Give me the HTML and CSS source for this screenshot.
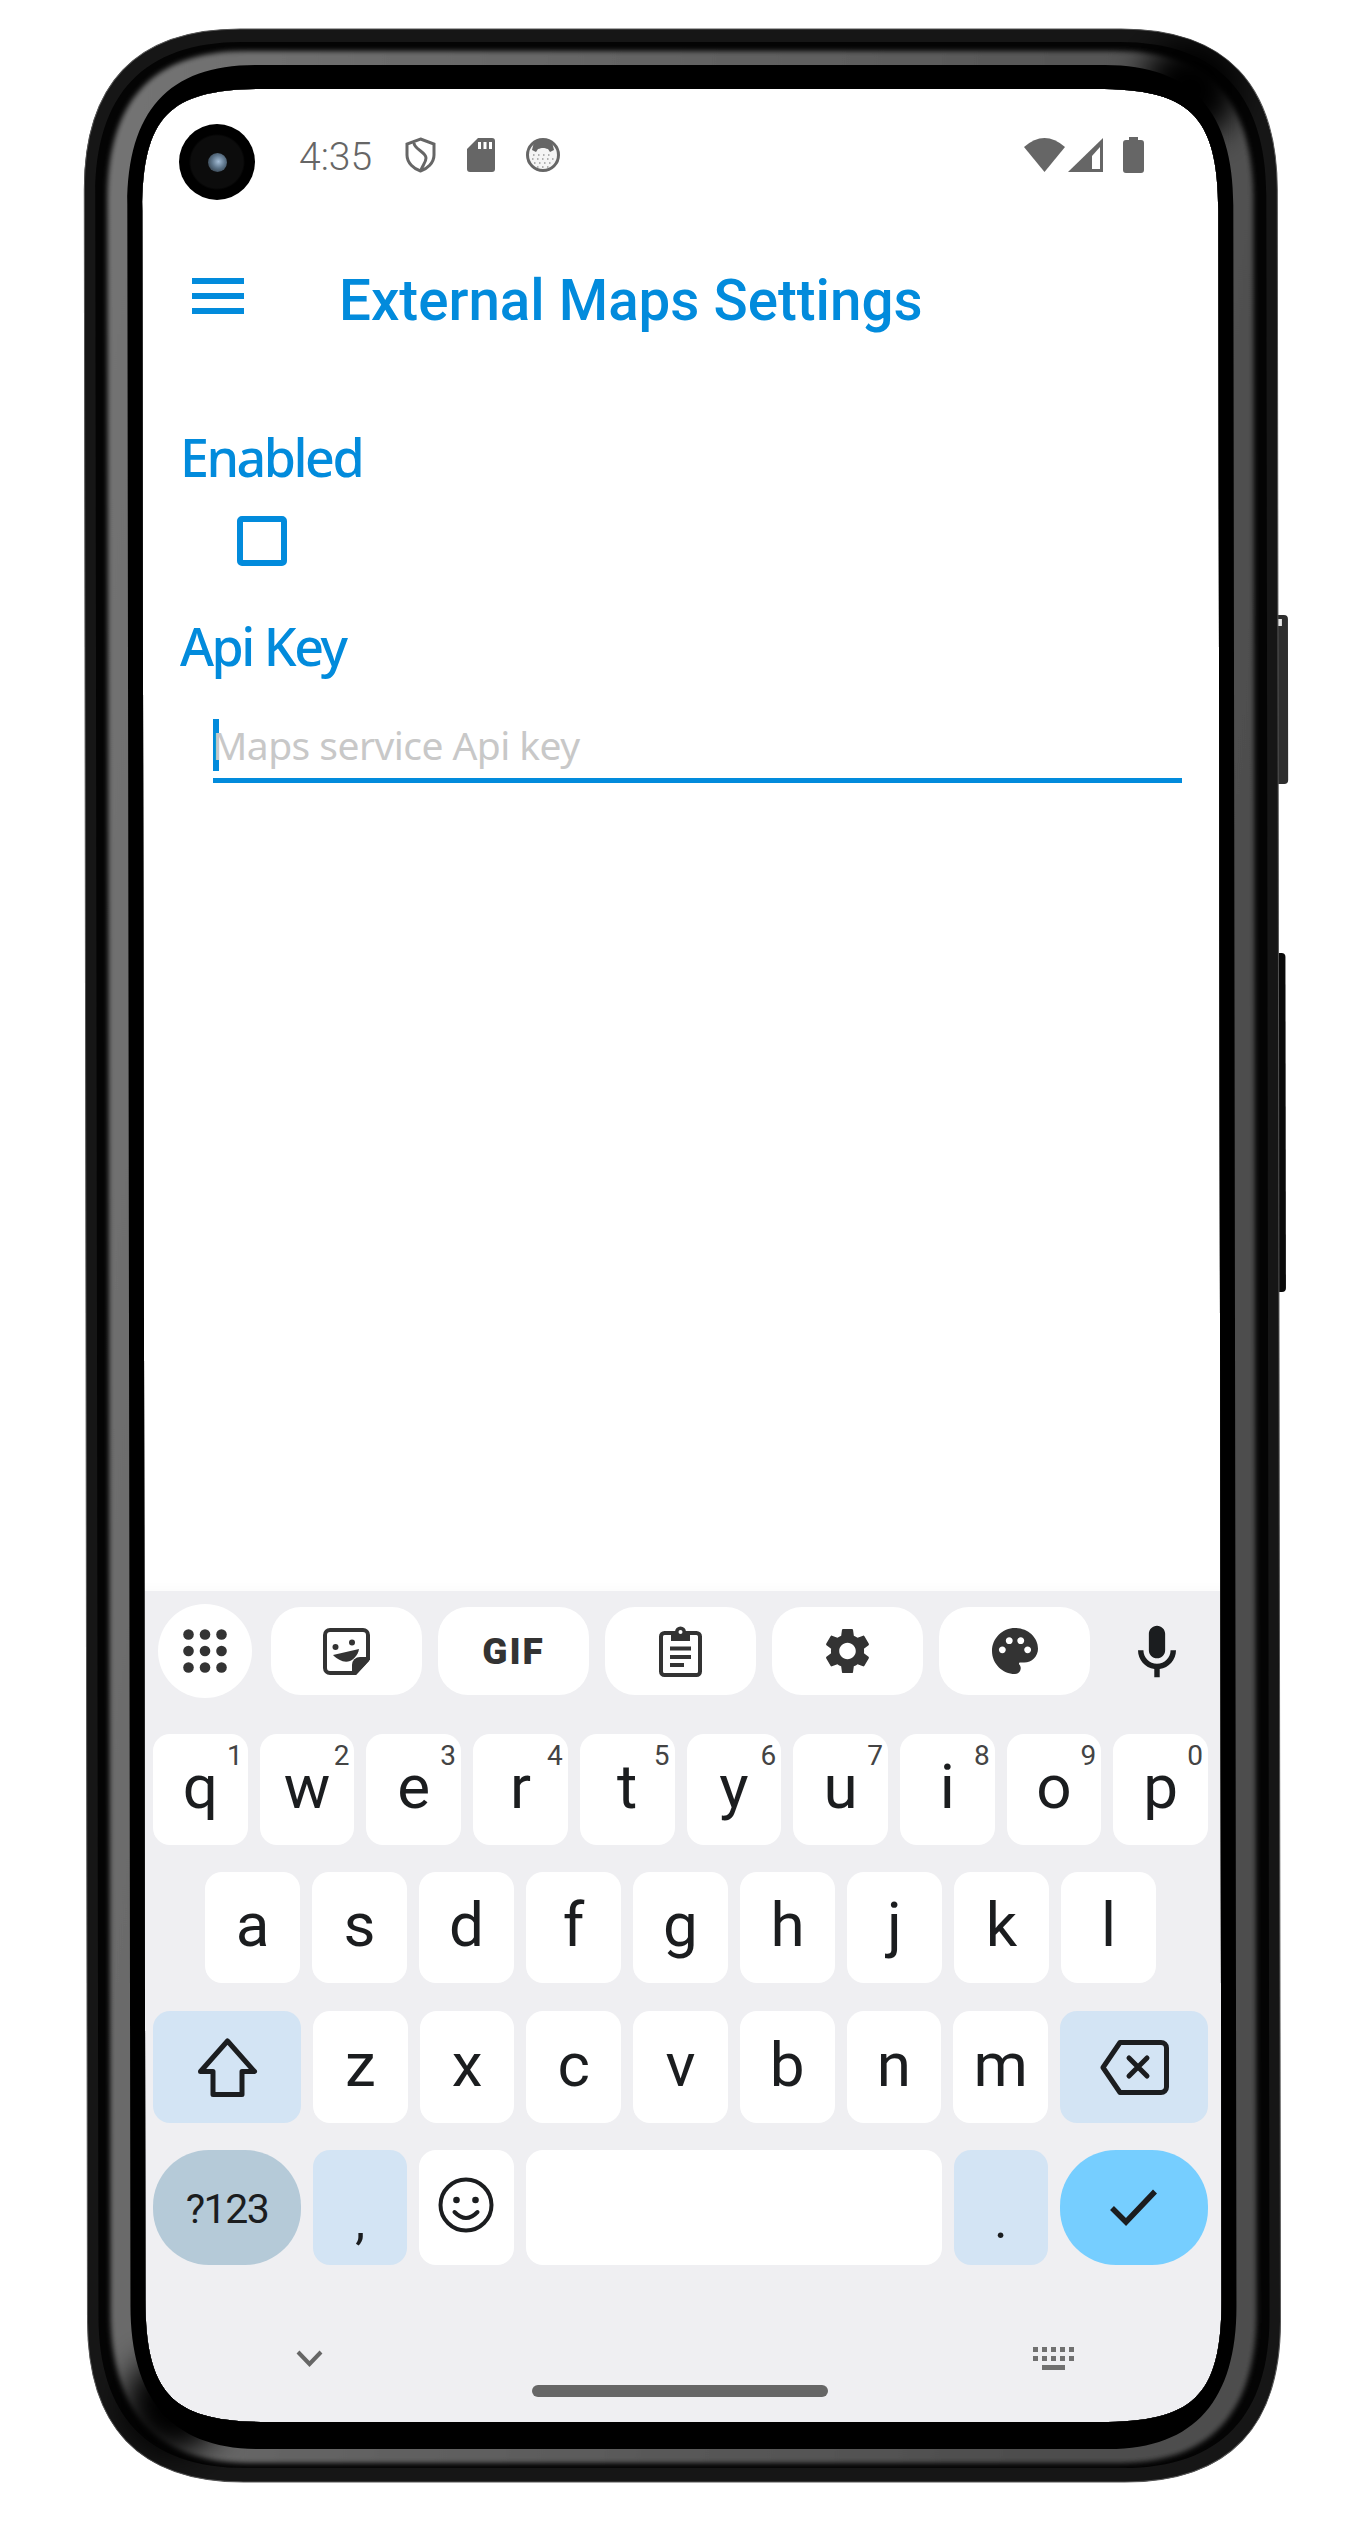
FILE: index.html
```html
<!DOCTYPE html>
<html lang="en">
<head>
    <meta charset="UTF-8">
    <meta name="viewport" content="width=device-width, initial-scale=1.0">
    <title>External Maps Settings</title>
    <link rel="stylesheet" href="styles.css">
</head>
<body>

<div class="phone">

    <div class="screen">

        <div class="camera"><span class="lens"></span></div>

        <div class="status-bar">
            <span class="time">4:35</span>
            <svg class="status-icon" width="31" height="36" viewBox="0 0 31 36" fill="none" stroke="#666" stroke-width="3">
                <path d="M15.5 2 29 7V18C29 26 22 32 15.5 34 9 32 2 26 2 18V7Z"/>
                <path d="M9 6C9 12 21 15 21 21 21 25 18 28 16 33"/>
            </svg>
            <svg class="status-icon" width="28" height="34" viewBox="0 0 28 34" fill="#666">
                <path d="M11 0H25A3 3 0 0 1 28 3V31A3 3 0 0 1 25 34H3A3 3 0 0 1 0 31V11Z"/>
                <path fill="#fff" d="M11 4h3v7h-3zM16.5 4h3v7h-3zM22 4h3v7h-3z"/>
            </svg>
            <svg class="status-icon" width="34" height="34" viewBox="0 0 34 34">
                <circle cx="17" cy="17" r="15.5" fill="#f4f4f4" stroke="#666" stroke-width="3"/>
                <path fill="#666" d="M8 4C13 0 21 0 26 4L28 12 24 14 22 11C18 9.500 16 9.500 12 11L10 14 6 12Z"/>
                <path fill="none" stroke="#999" stroke-width="1.5" stroke-dasharray="1.5 3.5" d="M7 17H27M6 21H28M8 25H26M11 29H23"/>
            </svg>
            <div class="status-right">
                <svg class="wifi" width="41" height="34" viewBox="0 0 41 34" fill="#666">
                    <path d="M0 9Q20.5 -9 41 9L20.5 34Z"/>
                </svg>
                <svg class="signal" width="35" height="34" viewBox="0 0 35 34" fill="#666">
                    <path d="M0 34 35 0V34Z"/>
                    <path fill="#fff" d="M24 18 32 9V31H24Z"/>
                </svg>
                <svg class="battery" width="21" height="36" viewBox="0 0 21 36" fill="#666">
                    <path d="M6 0H15V3H18A3 3 0 0 1 21 6V33A3 3 0 0 1 18 36H3A3 3 0 0 1 0 33V6A3 3 0 0 1 3 3H6Z"/>
                </svg>
            </div>
        </div>

        <header class="app-bar">
            <div class="menu-icon"><span></span><span></span><span></span></div>
            <h1 class="title">External Maps Settings</h1>
        </header>

        <main class="content">
            <div class="label">Enabled</div>
            <div class="checkbox"></div>
            <div class="label api-label">Api Key</div>
            <div class="field">
                <span class="caret"></span>
                <span class="placeholder">Maps service Api key</span>
            </div>
        </main>

        <section class="keyboard">
            <div class="toolbar">
                <div class="tool-round">
                    <svg width="44" height="44" viewBox="0 0 44 44" fill="#333">
                        <circle cx="5.5" cy="5.5" r="5.3"/><circle cx="22" cy="5.5" r="5.3"/><circle cx="38.5" cy="5.5" r="5.3"/>
                        <circle cx="5.5" cy="22" r="5.3"/><circle cx="22" cy="22" r="5.3"/><circle cx="38.5" cy="22" r="5.3"/>
                        <circle cx="5.5" cy="38.5" r="5.3"/><circle cx="22" cy="38.5" r="5.3"/><circle cx="38.5" cy="38.5" r="5.3"/>
                    </svg>
                </div>
                <div class="tool">
                    <svg width="47" height="47" viewBox="0 0 47 47">
                        <path fill="none" stroke="#333" stroke-width="4" d="M7 2H40A5 5 0 0 1 45 7V31L32 45H7A5 5 0 0 1 2 40V7A5 5 0 0 1 7 2Z"/>
                        <path fill="#333" d="M46 29V33L33 47H29V37A8 8 0 0 1 37 29Z"/>
                        <circle cx="12.5" cy="19" r="3" fill="#333"/><circle cx="29" cy="14.5" r="3" fill="#333"/>
                        <path fill="#333" d="M10 27 36 21C35 27 31 31 27 33 21 35 15 32 10 27Z"/>
                    </svg>
                </div>
                <div class="tool"><span class="gif">GIF</span></div>
                <div class="tool">
                    <svg width="43" height="51" viewBox="0 0 43 51" fill="none" stroke="#333" stroke-width="4">
                        <rect x="2" y="7" width="39" height="42" rx="3.5"/>
                        <path fill="#333" stroke="none" d="M12 6H16A5.5 5.5 0 0 1 27 6H31V15H12Z"/>
                        <circle cx="21.5" cy="6" r="2" fill="#fff" stroke="none"/>
                        <path d="M11 22.5H32M11 31H32M11 39H25"/>
                    </svg>
                </div>
                <div class="tool">
                    <svg width="45" height="46" viewBox="2.5 2 19 20" fill="#333">
                        <path d="M19.14 12.94c.04-.3.06-.61.06-.94 0-.32-.02-.64-.07-.94l2.03-1.58c.18-.14.23-.41.12-.61l-1.92-3.32c-.12-.22-.37-.29-.59-.22l-2.39.96c-.5-.38-1.03-.7-1.62-.94l-.36-2.54c-.04-.24-.24-.41-.48-.41h-3.84c-.24 0-.43.17-.47.41l-.36 2.54c-.59.24-1.13.57-1.62.94l-2.39-.96c-.22-.08-.47 0-.59.22L2.74 8.87c-.12.21-.08.47.12.61l2.03 1.58c-.05.3-.09.63-.09.94s.02.64.07.94l-2.03 1.58c-.18.14-.23.41-.12.61l1.92 3.32c.12.22.37.29.59.22l2.39-.96c.5.38 1.03.7 1.62.94l.36 2.54c.05.24.24.41.48.41h3.84c.24 0 .44-.17.47-.41l.36-2.54c.59-.24 1.13-.56 1.62-.94l2.39.96c.22.08.47 0 .59-.22l1.92-3.32c.12-.22.07-.47-.12-.61l-2.01-1.58zM12 15.6c-1.98 0-3.6-1.62-3.6-3.6s1.62-3.6 3.6-3.6 3.6 1.62 3.6 3.6-1.62 3.6-3.6 3.6z"/>
                    </svg>
                </div>
                <div class="tool">
                    <svg width="46" height="46" viewBox="2 2 20 20" fill="#333">
                        <path d="M12 2C6.49 2 2 6.49 2 12s4.49 10 10 10c1.38 0 2.5-1.12 2.5-2.5 0-.61-.23-1.2-.64-1.67-.08-.1-.13-.21-.13-.33 0-.28.22-.5.5-.5H16c3.31 0 6-2.69 6-6 0-4.96-4.49-9-10-9zm-5.5 11c-.83 0-1.5-.67-1.5-1.5S5.67 10 6.5 10 8 10.67 8 11.5 7.33 13 6.5 13zm3-4C8.67 9 8 8.33 8 7.5S8.67 6 9.5 6s1.5.67 1.5 1.5S10.33 9 9.5 9zm5 0c-.83 0-1.5-.67-1.5-1.5S13.67 6 14.5 6s1.5.67 1.5 1.5S15.33 9 14.5 9zm3 4c-.83 0-1.5-.67-1.5-1.5s.67-1.5 1.5-1.5 1.5.67 1.5 1.5-.67 1.5-1.5 1.5z"/>
                    </svg>
                </div>
                <svg class="mic" width="38" height="53" viewBox="5 2 14 19" fill="#1b1d1f">
                    <path d="M12 14c1.66 0 3-1.34 3-3V5c0-1.66-1.34-3-3-3S9 3.34 9 5v6c0 1.66 1.34 3 3 3zM17 11c0 2.76-2.24 5-5 5s-5-2.24-5-5H5c0 3.53 2.61 6.43 6 6.92V21h2v-3.08c3.39-.49 6-3.39 6-6.92h-2z"/>
                </svg>
            </div>

            <div class="key-row row-one">
                <div class="key">q<sup class="hint">1</sup></div>
                <div class="key">w<sup class="hint">2</sup></div>
                <div class="key">e<sup class="hint">3</sup></div>
                <div class="key">r<sup class="hint">4</sup></div>
                <div class="key">t<sup class="hint">5</sup></div>
                <div class="key">y<sup class="hint">6</sup></div>
                <div class="key">u<sup class="hint">7</sup></div>
                <div class="key">i<sup class="hint">8</sup></div>
                <div class="key">o<sup class="hint">9</sup></div>
                <div class="key">p<sup class="hint">0</sup></div>
            </div>

            <div class="key-row row-two">
                <div class="key">a</div>
                <div class="key">s</div>
                <div class="key">d</div>
                <div class="key">f</div>
                <div class="key">g</div>
                <div class="key">h</div>
                <div class="key">j</div>
                <div class="key">k</div>
                <div class="key">l</div>
            </div>

            <div class="key-row row-three">
                <div class="key key-wide key-blue">
                    <svg width="61" height="59" viewBox="0 0 61 59" fill="none" stroke="#1b1d1f" stroke-width="5" stroke-linejoin="round">
                        <path d="M30.5 3 57.5 33.5H45V56.5H16V33.5H3.5Z"/>
                    </svg>
                </div>
                <div class="key">z</div>
                <div class="key">x</div>
                <div class="key">c</div>
                <div class="key">v</div>
                <div class="key">b</div>
                <div class="key">n</div>
                <div class="key">m</div>
                <div class="key key-wide key-blue">
                    <svg width="69" height="55" viewBox="0 0 69 55" fill="none" stroke="#1b1d1f" stroke-width="5" stroke-linejoin="round">
                        <path d="M20 2.5H61A5.5 5.5 0 0 1 66.5 8V47A5.5 5.5 0 0 1 61 52.5H20L3 27.5Z"/>
                        <path stroke-linecap="round" d="M29 18 47 36M47 18 29 36"/>
                    </svg>
                </div>
            </div>

            <div class="key-row row-four">
                <div class="key key-wide key-symbols">?123</div>
                <div class="key key-blue key-punct">,</div>
                <div class="key">
                    <svg width="56" height="56" viewBox="0 0 56 56" fill="none" stroke="#1b1d1f" stroke-width="4">
                        <circle cx="28" cy="28" r="25.5"/>
                        <circle cx="18.5" cy="23" r="3.3" fill="#1b1d1f" stroke="none"/>
                        <circle cx="37.5" cy="23" r="3.3" fill="#1b1d1f" stroke="none"/>
                        <path stroke-linecap="round" d="M16.5 35Q28 47 39.5 35"/>
                    </svg>
                </div>
                <div class="key key-space"></div>
                <div class="key key-blue key-punct">.</div>
                <div class="key key-wide key-enter">
                    <svg width="47" height="37" viewBox="0 0 47 37" fill="none" stroke="#1b1d1f" stroke-width="5.5">
                        <path d="M2 19 16 33 45 2.5"/>
                    </svg>
                </div>
            </div>

            <div class="nav-bar">
                <svg class="chevron" width="27" height="17" viewBox="0 0 27 17" fill="none" stroke="#666" stroke-width="4">
                    <path d="M2 2 13.5 14 25 2"/>
                </svg>
                <div class="home-pill"></div>
                <svg class="kb-icon" width="42" height="23" viewBox="0 0 42 23" fill="#707070">
                    <path d="M0 0h5v5H0zM9 0h5v5H9zM18 0h5v5h-5zM27 0h5v5h-5zM36 0h5v5h-5zM0 9h5v5H0zM9 9h5v5H9zM18 9h5v5h-5zM27 9h5v5h-5zM36 9h5v5h-5zM9 18h23v5H9z"/>
                </svg>
            </div>
        </section>
    </div>

    <!-- phone body, sits over the screen edges -->
    <svg class="frame" width="1370" height="2534" viewBox="0 0 1370 2534">
        <defs>
            <clipPath id="ring">
                <path clip-rule="evenodd" d="M0 0H1370V2534H0ZM142 211C142 113 172 89 264 89H1096C1188 89 1218 113 1218 211V2300C1218 2398 1188 2422 1096 2422H264C172 2422 142 2398 142 2300Z"/>
            </clipPath>
            <clipPath id="body">
                <path d="M84 190C84 85 135 29 240 29H1121C1226 29 1277 85 1277 190V2321C1277 2426 1226 2482 1121 2482H240C135 2482 84 2426 84 2321Z"/>
            </clipPath>
            <linearGradient id="band" x1="0" y1="0" x2="1" y2="0.3">
                <stop offset="0" stop-color="#747474"/>
                <stop offset="1" stop-color="#4e4e4e"/>
            </linearGradient>
            <filter id="soft" x="-5%" y="-5%" width="110%" height="110%">
                <feGaussianBlur stdDeviation="2.5"/>
            </filter>
            <filter id="softer" x="-50%" y="-50%" width="200%" height="200%">
                <feGaussianBlur stdDeviation="16"/>
            </filter>
        </defs>
        <g transform="matrix(1 0 .0015 1 0 0)">
            <path fill="#2e2e2e" d="M1275 615H1283Q1287 615 1287 619V780Q1287 784 1283 784H1275Z"/>
            <path fill="#e6e6e6" d="M1276 619h5v7h-5z"/>
            <path fill="#0a0a0a" d="M1273 953H1280Q1284 953 1284 957V1288Q1284 1292 1280 1292H1273Z"/>
            <g clip-path="url(#ring)">
                <path fill="#161616" stroke="#555" stroke-width="1" d="M84 190C84 85 135 29 240 29H1121C1226 29 1277 85 1277 190V2321C1277 2426 1226 2482 1121 2482H240C135 2482 84 2426 84 2321Z"/>
                <path fill="#040404" d="M95 195C95 95 143 42 242 42H1119C1218 42 1266 95 1266 195V2316C1266 2415 1218 2468 1119 2468H242C143 2468 95 2415 95 2316Z"/>
                <g clip-path="url(#body)">
                    <path fill="url(#band)" filter="url(#soft)" d="M107 200C107 103 150 51 246 51H1115C1211 51 1253 103 1253 200V2311C1253 2408 1211 2463 1115 2463H246C150 2463 107 2408 107 2311Z"/>
                    <circle cx="1190" cy="90" r="50" fill="#000" filter="url(#softer)"/>
                    <circle cx="170" cy="2405" r="50" fill="#000" filter="url(#softer)"/>
                </g>
                <path fill="#000" d="M127 205C127 112 168 65 255 65H1105C1192 65 1233 112 1233 205V2306C1233 2399 1192 2449 1105 2449H255C168 2449 127 2399 127 2306Z"/>
            </g>
        </g>
    </svg>
</div>

</body>
</html>
```

FILE: styles.css
```css
body {
    margin: 0;
    background-color: #fff;
    font-family: Roboto, sans-serif;
}

.phone {
    position: relative;
    width: 1370px;
    height: 2534px;
    overflow: hidden;
    padding: 85px 0 0 138px;
    box-sizing: border-box;
}

.frame {
    position: absolute;
    left: 0;
    top: 0;
}

.screen {
    position: relative;
    display: flex;
    flex-direction: column;
    width: 1090px;
    height: 2345px;
    background-color: #fff;
}

.camera {
    position: absolute;
    left: 41px;
    top: 39px;
    display: flex;
    align-items: center;
    justify-content: center;
    width: 76px;
    height: 76px;
    border-radius: 50%;
    background: radial-gradient(circle, #0c0c0c 0, #0c0c0c 26px, #000 28px);
}

.lens {
    width: 19px;
    height: 19px;
    border-radius: 50%;
    background: radial-gradient(circle at 55% 45%, #a4bdd6 0, #5c7388 45%, #20262c 100%);
}

/* status bar */
.status-bar {
    display: flex;
    align-items: center;
    gap: 31px;
    height: 36px;
    margin-top: 52px;
    padding: 0 84px 0 161px;
}

.time {
    width: 75px;
    margin-top: 3px;
    font-size: 39px;
    font-weight: 300;
    line-height: 36px;
    color: #666;
    white-space: nowrap;
}

.status-icon {
    display: block;
    flex: none;
}

.status-right {
    display: flex;
    align-items: center;
    margin-left: auto;
}

.signal {
    margin-left: 3px;
}

.battery {
    margin-left: 20px;
}

/* app bar */
.app-bar {
    display: flex;
    align-items: center;
    height: 60px;
    margin-top: 97px;
    padding-left: 54px;
}

.menu-icon {
    display: flex;
    flex-direction: column;
    gap: 9px;
    width: 52px;
    margin-top: -9px;
}

.menu-icon span {
    height: 6px;
    background-color: #028bdc;
}

.title {
    margin: 2px 0 0 95px;
    font-size: 56.5px;
    font-weight: 500;
    line-height: 60px;
    color: #028bdc;
    white-space: nowrap;
}

/* form */
.content {
    flex: 1;
    padding-left: 42px;
    font-family: "Noto Sans", sans-serif;
}

.label {
    margin-top: 97px;
    font-size: 52px;
    font-weight: 500;
    line-height: 60px;
    letter-spacing: -2.5px;
    color: #028bdc;
}

.api-label {
    margin-top: 50px;
}

.checkbox {
    width: 38px;
    height: 38px;
    margin: 29px 0 0 57px;
    border: 6px solid #028bdc;
    border-radius: 5px;
}

.field {
    display: flex;
    width: 969px;
    height: 52px;
    margin: 43px 0 0 33px;
    padding-bottom: 7px;
    border-bottom: 5px solid #028bdc;
}

.caret {
    flex: none;
    width: 6px;
    background-color: #028bdc;
}

.placeholder {
    margin-left: -7px;
    font-size: 39px;
    line-height: 52px;
    letter-spacing: -0.55px;
    color: #c8c8c8;
    white-space: nowrap;
}

/* keyboard */
.keyboard {
    display: flex;
    flex-direction: column;
    height: 839px;
    padding-top: 13px;
    box-sizing: border-box;
    background-color: #efeff2;
    box-shadow: 0 -5px 8px rgba(0, 0, 0, 0.015);
}

.toolbar {
    display: flex;
    align-items: center;
    gap: 16px;
    height: 94px;
    padding-left: 20px;
}

.tool,
.tool-round {
    display: flex;
    align-items: center;
    justify-content: center;
    background-color: #fff;
}

.tool {
    width: 151px;
    height: 88px;
    border-radius: 30px;
}

.tool-round {
    width: 94px;
    height: 94px;
    margin-right: 3px;
    border-radius: 50%;
}

.gif {
    font-size: 37px;
    font-weight: 900;
    line-height: 1;
    letter-spacing: 2px;
    color: #333;
}

.mic {
    margin-left: 32px;
}

.key-row {
    display: flex;
    gap: 12px;
    height: 111px;
    margin-top: 27px;
    padding: 0 20px 0 15px;
}

.row-one {
    margin-top: 36px;
}

.row-two {
    padding: 0 72px 0 67px;
}

.row-three {
    height: 112px;
    margin-top: 28px;
}

.row-four {
    height: 115px;
}

.key {
    position: relative;
    display: flex;
    flex: 1 1 0;
    align-items: center;
    justify-content: center;
    padding-bottom: 5px;
    box-sizing: border-box;
    border-radius: 17px;
    background-color: #fff;
    font-size: 62px;
    line-height: 1;
    color: #1b1d1f;
}

.key-wide {
    flex: none;
    width: 148px;
    padding-bottom: 0;
}

.key-space {
    flex: none;
    width: 416px;
}

.key-blue {
    background-color: #d3e4f4;
}

.key-symbols {
    padding-top: 4px;
    border-radius: 56px;
    background-color: #b5cad8;
    font-size: 41px;
    letter-spacing: -1.5px;
}

.key-enter {
    border-radius: 56px;
    background-color: #76ceff;
}

.key-punct {
    padding: 26px 0 0;
    font-size: 50px;
}

.hint {
    position: absolute;
    top: 8px;
    right: 5px;
    font-size: 28px;
    line-height: 28px;
    vertical-align: baseline;
    color: #444;
}

/* gesture area */
.nav-bar {
    display: flex;
    align-items: flex-start;
    margin-top: 82px;
    padding-left: 158px;
}

.chevron {
    margin-top: 3px;
}

.home-pill {
    width: 296px;
    height: 12px;
    margin: 38px 0 0 209px;
    border-radius: 6px;
    background-color: #666;
}

.kb-icon {
    margin-left: 205px;
}
```
